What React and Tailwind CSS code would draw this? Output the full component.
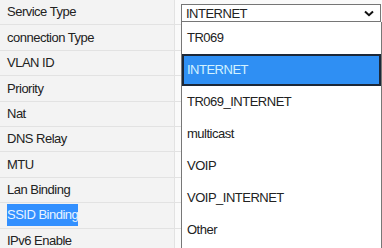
import React from 'react'

const ROWS = [
  'Service Type',
  'connection Type',
  'VLAN ID',
  'Priority',
  'Nat',
  'DNS Relay',
  'MTU',
  'Lan Binding',
  'SSID Binding',
  'IPv6 Enable',
]

const OPTIONS = ['TR069', 'INTERNET', 'TR069_INTERNET', 'multicast', 'VOIP', 'VOIP_INTERNET', 'Other']

const App = () => {
  return (
    <div
      className="relative w-[382px] h-[248px] overflow-hidden bg-white text-[13px] tracking-[-0.5px] text-[#222]"
      style={{ fontFamily: '"Liberation Sans", Arial, sans-serif' }}
    >
      <div className="flex flex-col">
        {ROWS.map((label) => (
          <div key={label} className="flex h-[25.4px] border-b border-[#e2e2e2]">
            <div className="w-[175px] flex items-center bg-[#f3f3f3] border-r border-[#e2e2e2] pl-[7px]">
              {label === 'SSID Binding' ? (
                <span className="bg-[#3390ff] text-[#e8f4ff] leading-[22px]">{label}</span>
              ) : (
                label
              )}
            </div>
            <div className="flex-1 bg-[#fafafa]" />
          </div>
        ))}
      </div>

      <div className="absolute left-[181px] top-[4px] w-[200px] h-[18px] flex items-center justify-between border border-[#767676] bg-white pl-[4px] pr-[6px] leading-none">
        <span>INTERNET</span>
        <svg width="10" height="7" viewBox="0 0 10 7">
          <path d="M1 1.5 L5 5.2 L9 1.5" fill="none" stroke="#111" strokeWidth="2" />
        </svg>
      </div>

      <div className="absolute left-[181px] top-[22px] w-[201px] h-[240px] border-x border-b border-[#777] bg-white">
        {OPTIONS.map((opt) => (
          <div
            key={opt}
            className={
              opt === 'INTERNET'
                ? 'h-[32px] flex items-center pl-[3px] bg-[#2f8ff3] border-2 border-[#1c2838] text-[#d2f2ff]'
                : 'h-[32px] flex items-center pl-[5px]'
            }
          >
            {opt}
          </div>
        ))}
      </div>
    </div>
  )
}

export default App
